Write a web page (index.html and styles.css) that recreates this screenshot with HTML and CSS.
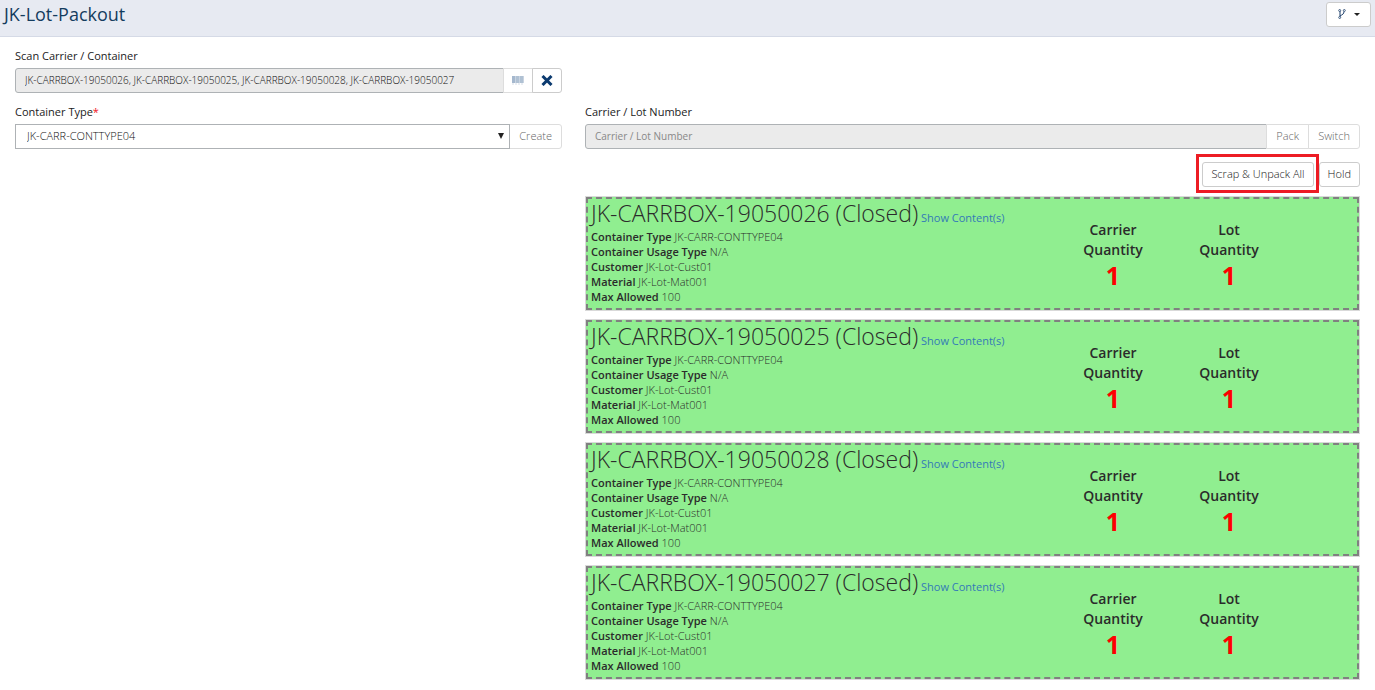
FILE: index.html
```html
<!DOCTYPE html>
<html lang="en">
<head>
<meta charset="utf-8">
<title>JK-Lot-Packout</title>
<link rel="stylesheet" href="styles.css">
</head>
<body>
<header class="page-header">
  <h1 class="page-title">JK-Lot-Packout</h1>
  <button class="btn btn-menu" type="button" aria-label="Workflow menu">
    <svg class="icon-branch" viewBox="0 0 8 10" width="8" height="10" aria-hidden="true"><path d="M2 2v6M6 2.500c0 2.500-1.500 3-4 4.500" fill="none" stroke="#1d3f6b" stroke-width="1"/><circle cx="1.700" cy="1.500" r="1" fill="#fff" stroke="#1d3f6b" stroke-width=".8"/><circle cx="6.300" cy="1.500" r="1" fill="#fff" stroke="#1d3f6b" stroke-width=".8"/><circle cx="1.700" cy="8.500" r="1" fill="#fff" stroke="#1d3f6b" stroke-width=".8"/></svg>
    <svg viewBox="0 0 6 3" width="6" height="3" aria-hidden="true"><path d="M0 0h6L3 3z" fill="#222"/></svg>
  </button>
</header>
<main class="layout">
  <section class="scan-panel">
    <label class="label" for="scan">Scan Carrier / Container</label>
    <div class="input-group">
      <input class="control" id="scan" type="text" disabled value="JK-CARRBOX-19050026, JK-CARRBOX-19050025, JK-CARRBOX-19050028, JK-CARRBOX-19050027">
      <button class="btn btn-icon" type="button" aria-label="Scan" disabled>
        <svg viewBox="0 0 12 9" width="12" height="9" aria-hidden="true"><path d="M0 0h3v7H0z" fill="#a5b8ce"/><path d="M3 0h1v7H3zM7 0h1v7H7zM11 0h1v7h-1z" fill="#c9d4e1"/><path d="M4 0h3v7H4zM8 0h3v7H8z" fill="#b0c1d3"/><path d="M0 8h12" stroke="#d5dde7" stroke-dasharray="2 1"/></svg>
      </button>
      <button class="btn btn-icon" type="button" aria-label="Clear">
        <svg viewBox="0 0 12 11" width="12" height="11" aria-hidden="true"><path d="M1.500 1l9 9M10.500 1l-9 9" stroke="#0b3a6f" stroke-width="3"/></svg>
      </button>
    </div>
    <label class="label" for="type">Container Type<span class="required">*</span></label>
    <div class="input-group">
      <div class="select-wrap">
        <select class="control select" id="type"><option>JK-CARR-CONTTYPE04</option></select>
        <svg class="select-arrow" viewBox="0 0 6 6" width="6" height="6" aria-hidden="true"><path d="M0 0h6L3 6z" fill="#222"/></svg>
      </div>
      <button class="btn" type="button" disabled>Create</button>
    </div>
  </section>
  <section class="lot-panel">
    <label class="label" for="lot">Carrier / Lot Number</label>
    <div class="input-group">
      <input class="control" id="lot" type="text" disabled placeholder="Carrier / Lot Number">
      <button class="btn" type="button" disabled>Pack</button>
      <button class="btn" type="button" disabled>Switch</button>
    </div>
    <div class="actions">
      <button class="btn highlighted" type="button">Scrap &amp; Unpack All</button>
      <button class="btn" type="button">Hold</button>
    </div>
    <div class="cards">
      <article class="card">
        <div class="details">
          <div class="card-head"><h2 class="card-title">JK-CARRBOX-19050026 (Closed)</h2> <a class="link" href="#">Show Content(s)</a></div>
          <p class="row"><b>Container Type</b> JK-CARR-CONTTYPE04</p>
          <p class="row"><b>Container Usage Type</b> N/A</p>
          <p class="row"><b>Customer</b> JK-Lot-Cust01</p>
          <p class="row"><b>Material</b> JK-Lot-Mat001</p>
          <p class="row"><b>Max Allowed</b> 100</p>
        </div>
        <div class="quantity"><span>Carrier<br>Quantity</span><strong class="count">1</strong></div>
        <div class="quantity"><span>Lot<br>Quantity</span><strong class="count">1</strong></div>
      </article>
      <article class="card">
        <div class="details">
          <div class="card-head"><h2 class="card-title">JK-CARRBOX-19050025 (Closed)</h2> <a class="link" href="#">Show Content(s)</a></div>
          <p class="row"><b>Container Type</b> JK-CARR-CONTTYPE04</p>
          <p class="row"><b>Container Usage Type</b> N/A</p>
          <p class="row"><b>Customer</b> JK-Lot-Cust01</p>
          <p class="row"><b>Material</b> JK-Lot-Mat001</p>
          <p class="row"><b>Max Allowed</b> 100</p>
        </div>
        <div class="quantity"><span>Carrier<br>Quantity</span><strong class="count">1</strong></div>
        <div class="quantity"><span>Lot<br>Quantity</span><strong class="count">1</strong></div>
      </article>
      <article class="card">
        <div class="details">
          <div class="card-head"><h2 class="card-title">JK-CARRBOX-19050028 (Closed)</h2> <a class="link" href="#">Show Content(s)</a></div>
          <p class="row"><b>Container Type</b> JK-CARR-CONTTYPE04</p>
          <p class="row"><b>Container Usage Type</b> N/A</p>
          <p class="row"><b>Customer</b> JK-Lot-Cust01</p>
          <p class="row"><b>Material</b> JK-Lot-Mat001</p>
          <p class="row"><b>Max Allowed</b> 100</p>
        </div>
        <div class="quantity"><span>Carrier<br>Quantity</span><strong class="count">1</strong></div>
        <div class="quantity"><span>Lot<br>Quantity</span><strong class="count">1</strong></div>
      </article>
      <article class="card">
        <div class="details">
          <div class="card-head"><h2 class="card-title">JK-CARRBOX-19050027 (Closed)</h2> <a class="link" href="#">Show Content(s)</a></div>
          <p class="row"><b>Container Type</b> JK-CARR-CONTTYPE04</p>
          <p class="row"><b>Container Usage Type</b> N/A</p>
          <p class="row"><b>Customer</b> JK-Lot-Cust01</p>
          <p class="row"><b>Material</b> JK-Lot-Mat001</p>
          <p class="row"><b>Max Allowed</b> 100</p>
        </div>
        <div class="quantity"><span>Carrier<br>Quantity</span><strong class="count">1</strong></div>
        <div class="quantity"><span>Lot<br>Quantity</span><strong class="count">1</strong></div>
      </article>
    </div>
  </section>
</main>
</body>
</html>
```
FILE: styles.css
```css
* { box-sizing: border-box; }
body {
  margin: 0;
  background: #fff;
  color: #2b2b2b;
  font: 300 11px/15px "Open Sans", "Noto Sans", sans-serif;
}
.page-header {
  display: flex;
  align-items: flex-start;
  justify-content: space-between;
  height: 37px;
  padding: 2px 4px;
  background: #e7eaf2;
  border-bottom: 1px solid #d5dae6;
}
.page-title {
  margin: 0;
  color: #143c5e;
  font-size: 18px;
  font-weight: 400;
  line-height: 24px;
}
.layout {
  display: grid;
  grid-template-columns: 547fr 775fr;
  gap: 23px;
  padding: 11px 15px;
}
.lot-panel { padding-top: 56px; }
.label {
  display: block;
  height: 20px;
  color: #222;
  font-weight: 400;
}
.required { color: #f0141e; }
.input-group { display: flex; margin-bottom: 11px; }
.control {
  flex: 1;
  min-width: 0;
  height: 25px;
  padding: 0 9px 1px;
  border: 1px solid #aeb2b5;
  border-radius: 3px 0 0 3px;
  background: #fff;
  color: #111;
  font: inherit;
  font-size: 10px;
}
.control:disabled { background: #ebebeb; color: #111; }
.control::placeholder { color: #888; opacity: 1; font-weight: 400; }
.select-wrap { position: relative; display: flex; flex: 1; }
.select { padding: 0 11px 2px; border-radius: 0; appearance: none; font-size: 11px; }
.select-arrow { position: absolute; top: 9px; right: 6px; pointer-events: none; }
.btn {
  display: inline-flex;
  align-items: center;
  justify-content: center;
  height: 25px;
  padding: 0 9px 2px;
  border: 1px solid #ccc;
  border-radius: 3px;
  background: #fff;
  color: #111;
  font: inherit;
  white-space: nowrap;
}
.btn:disabled { border-color: #ddd; color: #666; }
.input-group .btn { margin-left: -1px; border-radius: 0; }
.input-group .btn:last-child { border-radius: 0 3px 3px 0; }
.input-group .btn-icon { width: 30px; }
.input-group .btn-icon, .btn-menu { padding: 0 0 1px; }
.btn-menu { width: 45px; gap: 8px; }
.actions { display: flex; justify-content: flex-end; gap: 5px; margin: 13px 0 10px; }
.actions .btn { padding: 0 8px 2px; }
.highlighted { position: relative; }
.highlighted::after {
  content: "";
  position: absolute;
  inset: -9px -6px -7px -7px;
  border: 3px solid #ed1c24;
}
.cards { display: grid; gap: 10px; padding: 0 1px; }
.card {
  display: flex;
  padding: 0 0 4px 3px;
  border: 2px dashed #808080;
  background: #90ee90;
  box-shadow: 0 0 0 1px #d9d9d9;
}
.details { flex: 1; }
.card-head { height: 30px; line-height: 28px; white-space: nowrap; }
.card-title { display: inline; margin: 0; font-size: 23px; font-weight: 300; }
.link { color: #337ab7; font-weight: 400; text-decoration: none; }
.row { margin: 0; }
.row b { font-weight: 600; }
.quantity {
  width: 116px;
  padding-top: 21px;
  text-align: center;
  font-size: 14px;
  font-weight: 600;
  line-height: 20px;
}
.quantity:last-child { margin-right: 70px; }
.count {
  display: block;
  color: #f00;
  font-size: 25px;
  font-weight: 700;
  line-height: 30px;
}
```
